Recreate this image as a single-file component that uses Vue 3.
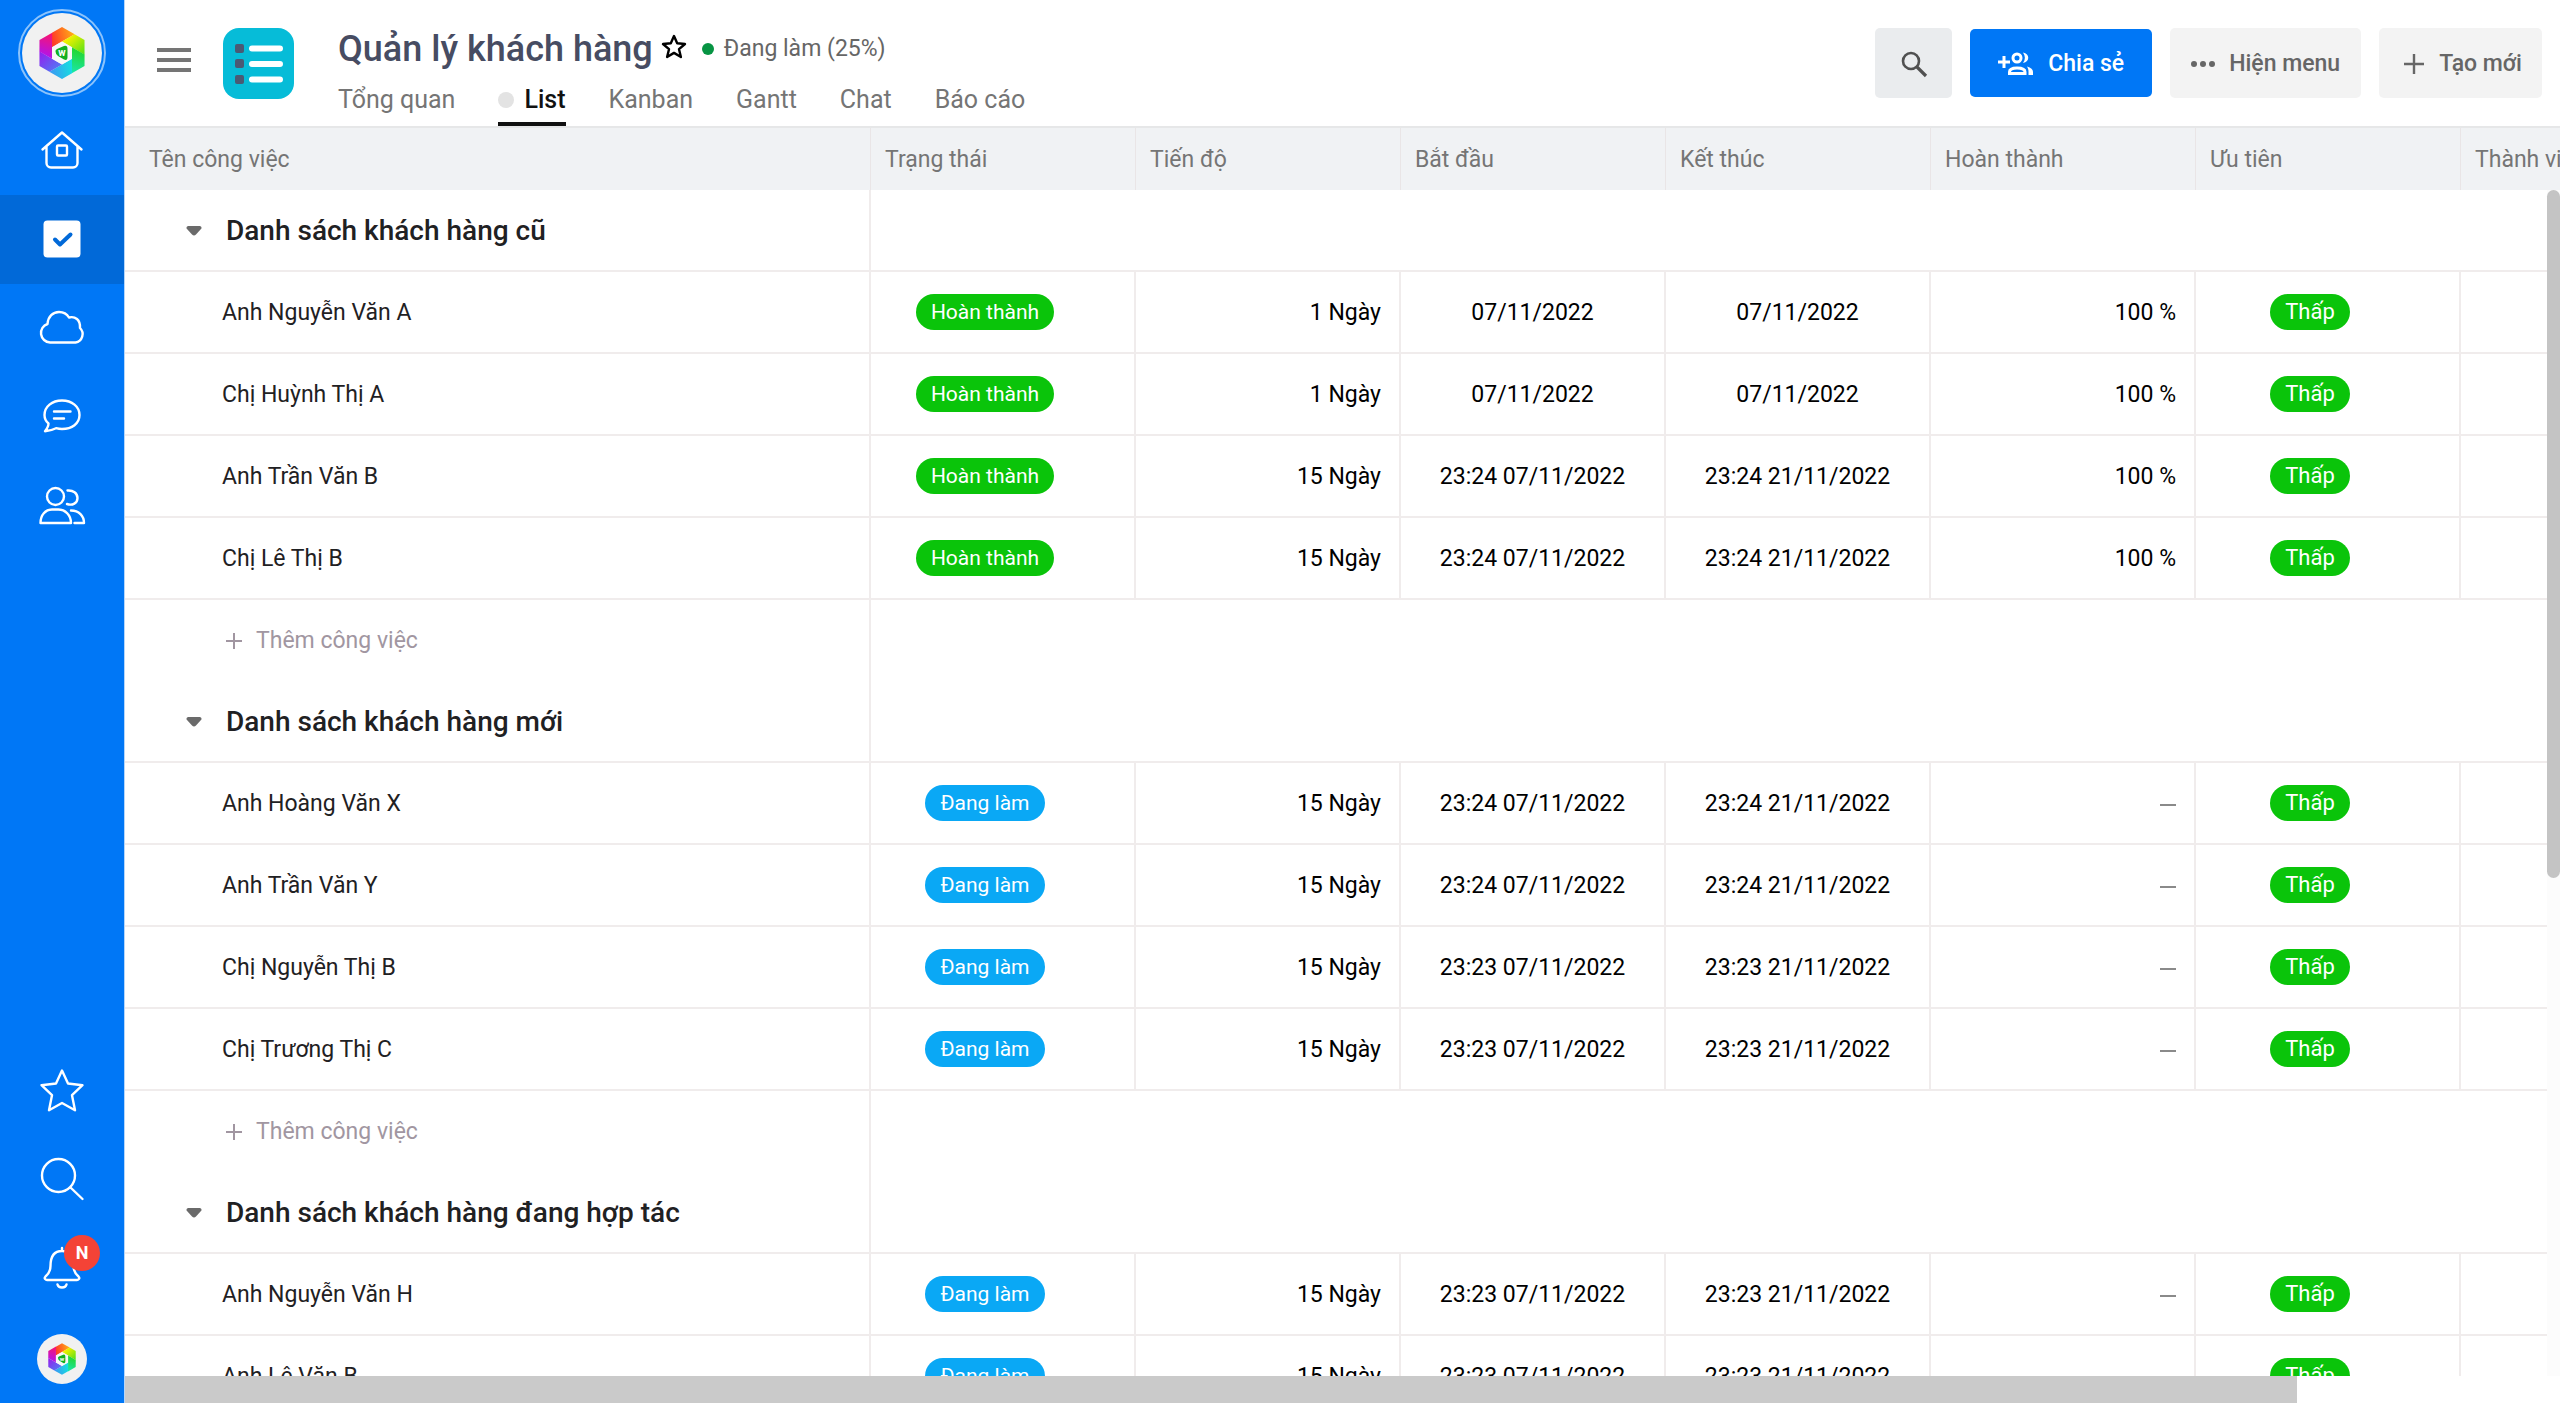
<script setup>
const nav = [
  { key: 'home', label: 'Trang chủ' },
  { key: 'task', label: 'Công việc', active: true },
  { key: 'cloud', label: 'Tài liệu' },
  { key: 'chat', label: 'Trò chuyện' },
  { key: 'people', label: 'Nhân sự' },
]
const tools = [
  { key: 'star', label: 'Yêu thích' },
  { key: 'search', label: 'Tìm kiếm' },
  { key: 'bell', label: 'Thông báo', badge: 'N' },
]
const tabs = [
  { name: 'Tổng quan' },
  { name: 'List', active: true },
  { name: 'Kanban' },
  { name: 'Gantt' },
  { name: 'Chat' },
  { name: 'Báo cáo' },
]
const columns = ['Trạng thái', 'Tiến độ', 'Bắt đầu', 'Kết thúc', 'Hoàn thành', 'Ưu tiên', 'Thành viên']

// start and end colour of each blade of the logo, clockwise from the top
const blades = [
  ['#ff3c28', '#ffb414'],
  ['#f0f000', '#4ae018'],
  ['#22d838', '#18e8b0'],
  ['#18dce0', '#3c96f4'],
  ['#5a6cf4', '#9a18ec'],
  ['#b814e0', '#ff1464'],
]

const done = (name, days, start, end) => ({ name, status: 'Hoàn thành', kind: 'green', days, start, end, percent: '100 %' })
const doing = (name, time) => ({
  name, status: 'Đang làm', kind: 'blue', days: '15 Ngày',
  start: `${time} 07/11/2022`, end: `${time} 21/11/2022`, percent: '',
})
const groups = [
  {
    title: 'Danh sách khách hàng cũ',
    add: true,
    tasks: [
      done('Anh Nguyễn Văn A', '1 Ngày', '07/11/2022', '07/11/2022'),
      done('Chị Huỳnh Thị A', '1 Ngày', '07/11/2022', '07/11/2022'),
      done('Anh Trần Văn B', '15 Ngày', '23:24 07/11/2022', '23:24 21/11/2022'),
      done('Chị Lê Thị B', '15 Ngày', '23:24 07/11/2022', '23:24 21/11/2022'),
    ],
  },
  {
    title: 'Danh sách khách hàng mới',
    add: true,
    tasks: [
      doing('Anh Hoàng Văn X', '23:24'),
      doing('Anh Trần Văn Y', '23:24'),
      doing('Chị Nguyễn Thị B', '23:23'),
      doing('Chị Trương Thị C', '23:23'),
    ],
  },
  {
    title: 'Danh sách khách hàng đang hợp tác',
    add: false,
    tasks: [doing('Anh Nguyễn Văn H', '23:23'), doing('Anh Lê Văn B', '23:23')],
  },
]
</script>

<template>
  <div class="app">
    <svg class="defs" width="0" height="0" aria-hidden="true">
      <defs>
        <linearGradient v-for="(b, i) in blades" :id="'blade' + i" :key="i" x1="0" y1="0.500" x2="1" y2="0.300">
          <stop offset="0" :stop-color="b[0]" />
          <stop offset="1" :stop-color="b[1]" />
        </linearGradient>
        <symbol id="mark" viewBox="-23 -26 46 52">
          <polygon v-for="(b, i) in blades" :key="i" points="-10,-20.300 0,-26 12.700,-18.700 0,-11.500 -10,-5.700" :fill="`url(#blade${i})`" :transform="`rotate(${i * 60})`" />
          <polygon points="0,-11.500 10,-5.700 10,5.700 0,11.500 -10,5.700 -10,-5.700" fill="#f8f8f8" />
          <path d="M-6.500-1.500Q-7-3-5-4L2-7Q5.500-8 5.500-4V4Q5.500 8 2 6.500L-4 3Q-6.500 1-6.500-1.500Z" fill="#12b020" />
          <text x="0" y="3" text-anchor="middle" font-size="10" font-weight="700" fill="#fff">w</text>
        </symbol>
      </defs>
    </svg>

    <nav class="sidebar">
      <div class="side-group">
        <a href="#" class="brand" aria-label="Trang chính">
          <span class="logo"><svg width="46" height="52"><use href="#mark" /></svg></span>
        </a>
        <a v-for="n in nav" :key="n.key" href="#" class="side-item" :class="{ active: n.active }" :aria-label="n.label">
          <svg v-if="n.key === 'home'" class="line" width="50" height="50" viewBox="0 0 50 50"><path d="M5.500 25.500 25 8.500 44.500 25.500M9.500 22.500V39a4.500 4.500 0 0 0 4.500 4.500h22a4.500 4.500 0 0 0 4.500-4.500V22.500" /><rect x="20" y="21.500" width="10" height="10" rx="1" /></svg>
          <svg v-else-if="n.key === 'task'" class="line" width="50" height="50" viewBox="0 0 50 50"><rect x="6.500" y="7.500" width="37" height="37" rx="4" fill="#fff" stroke="none" /><path class="tick" d="m18 26.500 5 5 10.500-10" /></svg>
          <svg v-else-if="n.key === 'cloud'" class="line" width="50" height="50" viewBox="0 0 50 50"><path d="M13 40.500a9.500 9.500 0 0 1-2.500-18.500C11 14.500 16 10 22 10c4.500 0 8 2 10 5.500 6-1.500 11.500 2 11 10.500A8.500 8.500 0 0 1 38.500 40.500Z" /></svg>
          <svg v-else-if="n.key === 'chat'" class="line" width="50" height="50" viewBox="0 0 50 50"><path d="M25 9.500c10 0 17.500 6 17.500 14.500S35 38 25 38c-2 0-4-.300-6-.800-3 1.500-6 2.800-11 3 2-2.500 3.500-4.500 3.500-7.700C8.500 30 7.500 27 7.500 24 7.500 15.500 15 9.500 25 9.500ZM17 20.500h16.500M17 27.500h10" /></svg>
          <svg v-else class="line" width="50" height="50" viewBox="0 0 50 50"><circle cx="18.500" cy="16.500" r="8.500" /><path d="M3.500 43c0-8 5-13.500 11.500-13.500h6.500C28 29.500 34 35 34 43ZM30.500 10.500c5.500-.500 10 2.500 10 7.500s-5 8-10.500 6M34 30.500c8 0 13 5.500 13 12.500h-9.500" /></svg>
        </a>
      </div>
      <div class="side-group">
        <button v-for="t in tools" :key="t.key" type="button" class="side-item" :aria-label="t.label">
          <svg v-if="t.key === 'star'" class="line" width="50" height="50" viewBox="0 0 50 50"><path d="m25 5.500 6 13 14.500 1.700-10.500 10 3 15L25 38l-13 7.200 3-15-10.500-10L19 18.500Z" /></svg>
          <svg v-else-if="t.key === 'search'" class="line" width="50" height="50" viewBox="0 0 50 50"><circle cx="21.500" cy="21.500" r="16.500" /><path d="M33.500 33.500 45.500 45" /></svg>
          <svg v-else class="line" width="50" height="50" viewBox="0 0 50 50"><path d="M25 5v3C16 8 13.500 15 13.500 23c0 5-2 8-5 10.500-2 2 .500 3.500 1.500 3.500h30c1 0 3.500-1.500 1.500-3.500-3-2.500-5-5.500-5-10.500C36.500 15 34 8 25 8M20.500 41.500c1 4 8 4 9 0" /></svg>
          <span v-if="t.badge" class="badge">{{ t.badge }}</span>
        </button>
        <a href="#" class="side-item" aria-label="Tài khoản">
          <span class="logo small"><svg width="28" height="32"><use href="#mark" /></svg></span>
        </a>
      </div>
    </nav>

    <main class="main">
      <header class="topbar">
        <button type="button" class="burger" aria-label="Menu"><i></i><i></i><i></i></button>
        <svg class="project-icon" width="71" height="71" viewBox="0 0 71 71">
          <rect width="71" height="71" rx="16" fill="#06bcd8" />
          <g fill="#4a5a74"><rect x="12" y="16" width="9" height="9" rx="2" /><rect x="12" y="31" width="9" height="9" rx="2" /><rect x="12" y="47" width="9" height="9" rx="2" /></g>
          <path d="M29 20.500h28M29 36h28M29 51.500h28" stroke="#fff" stroke-width="6" stroke-linecap="round" />
        </svg>
        <div class="heading">
          <div class="title-row">
            <h1>Quản lý khách hàng</h1>
            <button type="button" class="fav" aria-label="Đánh dấu"><svg width="26" height="26" viewBox="0 0 26 26"><path d="m13 2 3.200 7.300 7.800.700-6 5.200 1.900 7.800L13 18.900 6.100 23 8 15.200 2 10l7.800-.700Z" fill="none" stroke="#000" stroke-width="2.400" stroke-linejoin="round" /></svg></button>
            <span class="state">Đang làm (25%)</span>
          </div>
          <nav class="tabs">
            <a v-for="t in tabs" :key="t.name" href="#" class="tab" :class="{ current: t.active }">{{ t.name }}</a>
          </nav>
        </div>
        <div class="actions">
          <button type="button" class="btn find" aria-label="Tìm"><svg width="28" height="28" viewBox="0 0 28 28"><circle cx="11" cy="11" r="8" fill="none" stroke="#505050" stroke-width="2.600" /><path d="m17 17 9 9" stroke="#505050" stroke-width="3.200" /></svg></button>
          <button type="button" class="btn share">
            <svg width="36" height="30" viewBox="0 0 36 30" fill="none" stroke="#fff" stroke-width="3"><path d="M0 13h12M6 7v12" /><circle cx="19" cy="9" r="4" /><path d="M11.500 24.500v-1.500c0-3 4-4 7.500-4s8 1 8 4v1.500Z" /><path d="M25 3.500c7 1 7 9.500 0 10.500 2.500-3.500 2.500-7 0-10.500ZM29 17.500c4 1 6 3 6 5.500v3h-4.500v-3c0-2.500-.500-4-1.500-5.500Z" fill="#fff" stroke="none" /></svg>
            Chia sẻ
          </button>
          <button type="button" class="btn menu">
            <svg width="24" height="8" viewBox="0 0 24 8" fill="#666"><circle cx="3" cy="4" r="3" /><circle cx="12" cy="4" r="3" /><circle cx="21" cy="4" r="3" /></svg>
            Hiện menu
          </button>
          <button type="button" class="btn create">
            <svg width="22" height="22" viewBox="0 0 22 22" stroke="#666" stroke-width="2.400"><path d="M1 11h20M11 1v20" /></svg>
            Tạo mới
          </button>
        </div>
      </header>

      <section class="board">
        <table>
          <colgroup>
            <col class="col-name" />
            <col v-for="c in columns" :key="c" class="col-field" />
          </colgroup>
          <thead>
            <tr>
              <th scope="col" class="name-head">Tên công việc</th>
              <th v-for="c in columns" :key="c" scope="col">{{ c }}</th>
            </tr>
          </thead>
          <tbody v-for="g in groups" :key="g.title">
            <tr class="group-row">
              <td>
                <button type="button" class="group-toggle">
                  <svg width="16" height="10" viewBox="0 0 16 10"><path d="M2 0h12q2.500 1 1 3L10 8.500q-2 2-4 0L1 3Q-.500 1 2 0Z" fill="#6a6a6a" /></svg>
                  {{ g.title }}
                </button>
              </td>
              <td colspan="7" class="rest"></td>
            </tr>
            <tr v-for="t in g.tasks" :key="t.name" class="task-row">
              <td class="task-name">{{ t.name }}</td>
              <td class="tag"><span class="pill" :class="t.kind">{{ t.status }}</span></td>
              <td class="num">{{ t.days }}</td>
              <td class="date">{{ t.start }}</td>
              <td class="date">{{ t.end }}</td>
              <td class="num"><template v-if="t.percent">{{ t.percent }}</template><span v-else class="dash"></span></td>
              <td class="tag"><span class="pill priority green">Thấp</span></td>
              <td></td>
            </tr>
            <tr v-if="g.add" class="add-row">
              <td>
                <button type="button" class="add">
                  <svg width="16" height="16" viewBox="0 0 16 16" stroke="#a196a1" stroke-width="2"><path d="M0 8h16M8 0v16" /></svg>
                  Thêm công việc
                </button>
              </td>
              <td colspan="7" class="rest"></td>
            </tr>
          </tbody>
        </table>
        <div class="vtrack"><div class="vthumb"></div></div>
      </section>
      <div class="htrack"><div class="hthumb"></div></div>
    </main>
  </div>
</template>

<style>
body {
  margin: 0;
}
</style>

<style scoped>
.app {
  display: flex;
  height: 100vh;
  overflow: hidden;
  background: #fff;
  font-family: Roboto, "Liberation Sans", sans-serif;
  font-size: 23px;
  line-height: 28px;
  color: #1f2123;
}
button {
  margin: 0;
  padding: 0;
  border: 0;
  background: none;
  font: inherit;
  color: inherit;
  cursor: pointer;
}
a {
  color: inherit;
  text-decoration: none;
}
svg {
  display: block;
  flex: none;
}
.defs {
  position: absolute;
}

/* sidebar */
.sidebar {
  flex: none;
  width: 124px;
  border-right: 1px solid #b5d6fa;
  background: #0077f6;
  display: flex;
  flex-direction: column;
  justify-content: space-between;
}
.side-group {
  display: flex;
  flex-direction: column;
}
.brand {
  height: 106px;
  display: flex;
  align-items: center;
  justify-content: center;
}
.side-item {
  position: relative;
  height: 89px;
  width: 124px;
  display: flex;
  align-items: center;
  justify-content: center;
}
.side-item.active {
  background: #0169d8;
}
.line {
  margin-bottom: 4px;
  fill: none;
  stroke: #fff;
  stroke-width: 2.4;
  stroke-linecap: round;
  stroke-linejoin: round;
}
.tick {
  stroke: #0169d8;
  stroke-width: 4;
}
.badge {
  position: absolute;
  left: 64px;
  top: 10px;
  width: 36px;
  height: 36px;
  border-radius: 50%;
  background: #f44336;
  color: #fff;
  font-size: 18px;
  font-weight: 700;
  line-height: 35px;
  text-align: center;
}
.logo {
  width: 80px;
  height: 80px;
  border-radius: 50%;
  background: #f1f1f1;
  outline: 2px solid #8cc3fb;
  outline-offset: 2px;
  display: flex;
  align-items: center;
  justify-content: center;
}
.logo.small {
  width: 50px;
  height: 50px;
  outline: none;
}

/* top bar */
.main {
  flex: 1;
  min-width: 0;
  display: flex;
  flex-direction: column;
}
.topbar {
  flex: none;
  height: 126px;
  border-bottom: 2px solid #e6e7e8;
  padding: 0 18px 0 32px;
  display: flex;
  align-items: center;
}
.burger {
  width: 34px;
  margin: 0 32px 6px 0;
  display: flex;
  flex-direction: column;
  gap: 6px;
}
.burger i {
  height: 4px;
  background: #757575;
}
.project-icon {
  margin-right: 44px;
}
.heading {
  align-self: stretch;
  display: flex;
  flex-direction: column;
  justify-content: space-between;
  padding-top: 28px;
}
.title-row {
  display: flex;
  align-items: center;
  height: 42px;
}
h1 {
  margin: 0;
  font-size: 36px;
  line-height: 42px;
  font-weight: 500;
  color: #474c62;
}
.fav {
  margin: 0 15px 4px 8px;
}
.state {
  display: flex;
  align-items: center;
  gap: 10px;
  color: #666;
}
.state::before {
  content: "";
  width: 12px;
  height: 12px;
  border-radius: 50%;
  background: #079443;
}
.tabs {
  display: flex;
  gap: 43px;
  color: #757575;
  font-size: 25px;
}
.tab {
  height: 40px;
  border-bottom: 4px solid transparent;
  box-sizing: border-box;
  display: flex;
  align-items: flex-start;
  gap: 10px;
}
.tab.current {
  color: #111;
  border-color: #111;
  font-weight: 500;
}
.tab.current::before {
  content: "";
  width: 16px;
  height: 16px;
  margin-top: 6px;
  border-radius: 50%;
  background: #e3e3e3;
}
.actions {
  margin-left: auto;
  display: flex;
  align-items: center;
  gap: 18px;
}
.btn {
  box-sizing: border-box;
  height: 70px;
  border-radius: 5px;
  background: #f3f3f3;
  color: #666;
  font-weight: 500;
  display: flex;
  align-items: center;
  justify-content: center;
  gap: 14px;
  padding: 1px 21px 0;
}
.find {
  width: 77px;
  background: #eaecee;
}
.share {
  height: 68px;
  background: #0077f6;
  color: #fff;
  padding: 1px 28px 0;
}
.create {
  padding: 1px 20px 0 24px;
}

/* table */
.board {
  position: relative;
  flex: 1;
  min-height: 0;
  overflow: hidden;
}
table {
  table-layout: fixed;
  width: 2601px;
  border-collapse: separate;
  border-spacing: 0;
}
.col-name {
  width: 746px;
}
.col-field {
  width: 265px;
}
th {
  box-sizing: border-box;
  height: 62px;
  padding: 1px 14px 0;
  border-right: 1px solid #e9e5e6;
  background: #f0f2f4;
  color: #757575;
  font-weight: 400;
  text-align: left;
}
.name-head {
  padding-left: 24px;
}
td {
  box-sizing: border-box;
  height: 82px;
  padding: 2px 0 0;
  border-right: 2px solid #f0ecec;
  border-bottom: 2px solid #f0ecec;
}
.add-row td {
  height: 81px;
  padding-top: 0;
  border-bottom: 0;
}
.group-toggle {
  display: flex;
  align-items: center;
  gap: 24px;
  padding-left: 61px;
  font-size: 28px;
  font-weight: 500;
}
.task-row .task-name {
  padding-left: 97px;
}
.tag {
  text-align: center;
}
.task-row .tag {
  padding: 0 35px 0 0;
}
.pill {
  display: inline-block;
  height: 36px;
  padding: 0 15px;
  border-radius: 18px;
  color: #fff;
  font-size: 21px;
  line-height: 36px;
  vertical-align: middle;
}
.priority {
  font-size: 22px;
}
.green {
  background: #0ac40a;
}
.blue {
  background: #0aa8f5;
}
.num {
  text-align: right;
  color: #000;
}
.task-row .num {
  padding-right: 18px;
}
.date {
  text-align: center;
  color: #000;
}
.dash {
  display: inline-block;
  width: 16px;
  height: 2px;
  vertical-align: middle;
  background: #8a8a8a;
}
.add {
  display: flex;
  align-items: center;
  gap: 14px;
  padding-left: 101px;
  color: #a196a1;
}

/* scrollbars */
.vtrack {
  position: absolute;
  top: 62px;
  right: 0;
  bottom: 0;
  width: 13px;
  background: #fcfcfc;
}
.vthumb {
  height: 58%;
  border-radius: 7px;
  background: #c4c4c4;
}
.htrack {
  flex: none;
  height: 27px;
  background: #fff;
}
.hthumb {
  width: 89.2%;
  height: 100%;
  background: #cacaca;
}
</style>
